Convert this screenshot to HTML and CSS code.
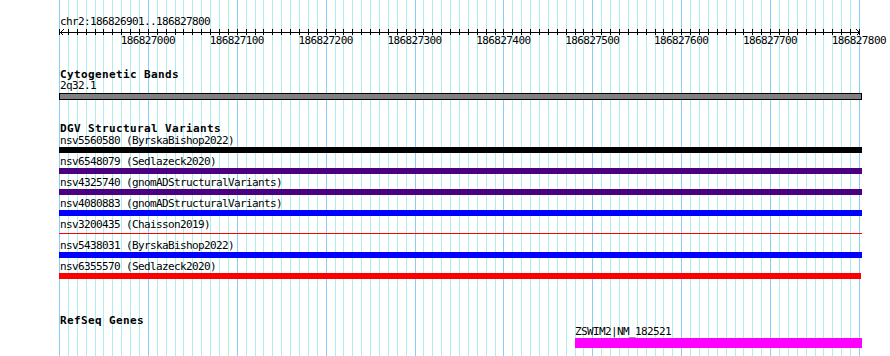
FILE: index.html
```html
<!DOCTYPE html>
<html>
<head>
  <title>chr2:186826901..186827800</title>
  <link rel="stylesheet" href="styles.css">
</head>
<body>
  <div class="panel">
    <!-- grid lines every 10 bp, drawn by the script below -->
    <svg id="grid" class="grid" width="803" height="356"></svg>

    <div class="ruler">
      <div class="ruler-title">chr2:186826901..186827800</div>
      <svg id="axis" class="axis" width="803" height="7"></svg>
      <div class="ruler-labels">
        <span>186827000</span>
        <span>186827100</span>
        <span>186827200</span>
        <span>186827300</span>
        <span>186827400</span>
        <span>186827500</span>
        <span>186827600</span>
        <span>186827700</span>
        <span>186827800</span>
      </div>
    </div>

    <div class="track cyto">
      <div class="track-title">Cytogenetic Bands</div>
      <div class="feature-label">2q32.1</div>
      <div class="band"></div>
    </div>

    <div class="track dgv">
      <div class="track-title">DGV Structural Variants</div>
      <div class="feature-label">nsv5560580 (ByrskaBishop2022)</div>
      <div class="bar black"></div>
      <div class="feature-label">nsv6548079 (Sedlazeck2020)</div>
      <div class="bar indigo"></div>
      <div class="feature-label">nsv4325740 (gnomADStructuralVariants)</div>
      <div class="bar indigo"></div>
      <div class="feature-label">nsv4080883 (gnomADStructuralVariants)</div>
      <div class="bar blue"></div>
      <div class="feature-label">nsv3200435 (Chaisson2019)</div>
      <div class="bar line"></div>
      <div class="feature-label">nsv5438031 (ByrskaBishop2022)</div>
      <div class="bar blue"></div>
      <div class="feature-label">nsv6355570 (Sedlazeck2020)</div>
      <div class="bar red short"></div>
    </div>

    <div class="track refseq">
      <div class="track-title">RefSeq Genes</div>
      <div class="gene">
        <div class="feature-label">ZSWIM2|NM_182521</div>
        <div class="gene-bar"></div>
      </div>
    </div>
  </div>

  <script>
    // 900 bp shown over 800 px, a line every 10 bp
    const SVG_NS = 'http://www.w3.org/2000/svg';
    const STEP = 800 / 90;

    function addLine(svg, x1, y1, x2, y2, color) {
      const line = document.createElementNS(SVG_NS, 'line');
      line.setAttribute('x1', x1);
      line.setAttribute('y1', y1);
      line.setAttribute('x2', x2);
      line.setAttribute('y2', y2);
      line.setAttribute('stroke', color);
      svg.appendChild(line);
    }

    const grid = document.getElementById('grid');
    const axis = document.getElementById('axis');

    for (let k = 0; k <= 90; k++) {
      const x = Math.round(k * STEP) + 0.5;
      addLine(grid, x, 0, x, 356, k % 10 === 0 ? '#87cefa' : '#afeeee');
      addLine(axis, x, 2, x, 8, '#000');
    }

    // axis with arrows at both ends
    addLine(axis, 1, 5.5, 801, 5.5, '#000');
    addLine(axis, 1.5, 5.5, 4.5, 2.5, '#000');
    addLine(axis, 1.5, 5.5, 4.5, 8.5, '#000');
    addLine(axis, 800.5, 5.5, 797.5, 2.5, '#000');
    addLine(axis, 800.5, 5.5, 797.5, 8.5, '#000');
  </script>
</body>
</html>
```

FILE: styles.css
```css
body {
  margin: 0;
  background: #fff;
  font-family: 'DejaVu Sans Mono', 'Liberation Mono', monospace;
  font-size: 11px;
  line-height: 11px;
  color: #000;
}
.panel {
  position: relative;
  width: 803px;
  height: 356px;
  margin-left: 59px;
  padding-top: 16px;
  box-sizing: border-box;
}
.grid {
  position: absolute;
  top: 0;
  left: 0;
  shape-rendering: crispEdges;
}
.ruler, .track {
  position: relative;
}
.ruler-title, .feature-label, .ruler-labels span {
  letter-spacing: -0.62px;
  white-space: nowrap;
}
.ruler-title {
  padding-left: 1px;
}
.axis {
  display: block;
  overflow: visible;
  shape-rendering: crispEdges;
}
.ruler-labels {
  display: flex;
  padding-left: 44.44px;
  margin-top: 1px;
}
.ruler-labels span {
  flex: 0 0 88.89px;
  text-align: center;
}
.track-title {
  font-weight: bold;
  letter-spacing: 0.38px;
  padding-left: 1px;
  white-space: nowrap;
}
.feature-label {
  padding-left: 1px;
}
.cyto {
  margin-top: 23px;
}
.band {
  height: 7px;
  margin-top: 2px;
  border: 1px solid #000;
  box-sizing: border-box;
  background: #808080;
}
.dgv {
  margin-top: 23px;
}
.dgv .track-title {
  margin-bottom: 1px;
}
.bar {
  height: 6px;
  margin: 1px 0 3px;
}
.bar.black {
  background: #000;
}
.bar.indigo {
  background: #4b0082;
}
.bar.blue {
  background: #0000ff;
}
.bar.red {
  background: #ff0000;
}
.bar.short {
  width: 802px;
}
.bar.line {
  height: 1px;
  margin: 3px 0 6px;
  background: #ff0000;
}
.refseq {
  margin-top: 36px;
}
.gene {
  margin-left: 516px;
}
.gene .feature-label {
  padding-left: 0;
}
.gene-bar {
  height: 10px;
  margin-top: 1px;
  background: #ff00ff;
}
```
